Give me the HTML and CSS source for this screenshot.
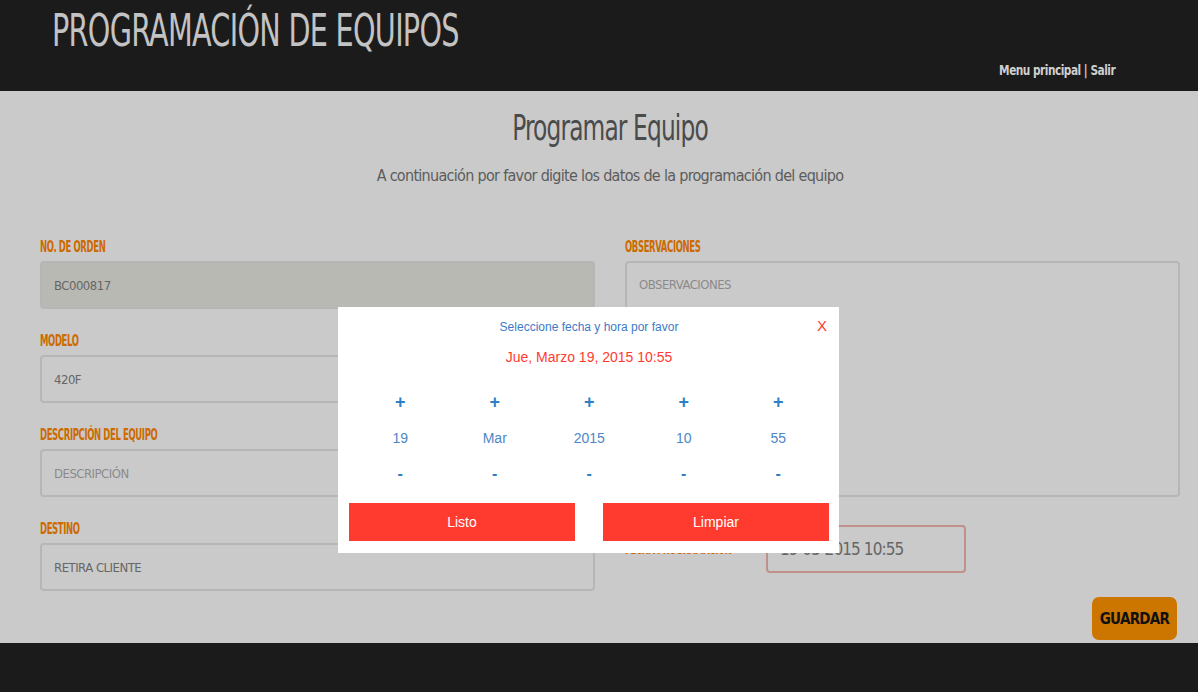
FILE: index.html
```html
<!DOCTYPE html>
<html lang="es">
<head>
<meta charset="utf-8">
<title>Programación de equipos</title>
<link rel="stylesheet" href="styles.css">
</head>
<body>
<header class="top">
  <h1 class="brand">PROGRAMACIÓN DE EQUIPOS</h1>
  <nav class="topnav"><a href="#">Menu principal</a> | <a href="#">Salir</a></nav>
</header>
<main class="page">
  <section class="intro">
    <h2 class="intro-title">Programar Equipo</h2>
    <p class="intro-text">A continuación por favor digite los datos de la programación del equipo</p>
  </section>
  <form class="form">
    <div class="col">
      <div class="field">
        <label class="lbl">NO. DE ORDEN</label>
        <div class="inp readonly">BC000817</div>
      </div>
      <div class="field">
        <label class="lbl">MODELO</label>
        <div class="inp">420F</div>
      </div>
      <div class="field">
        <label class="lbl">DESCRIPCIÓN DEL EQUIPO</label>
        <div class="inp placeholder">DESCRIPCIÓN</div>
      </div>
      <div class="field">
        <label class="lbl">DESTINO</label>
        <div class="inp">RETIRA CLIENTE</div>
      </div>
    </div>
    <div class="col">
      <div class="field">
        <label class="lbl">OBSERVACIONES</label>
        <div class="inp area placeholder">OBSERVACIONES</div>
      </div>
      <div class="daterow">
        <label class="lbl">FECHA PROGRAMACIÓN</label>
        <div class="inp date">19-03-2015 10:55</div>
      </div>
      <div class="actions"><button type="button" class="save">GUARDAR</button></div>
    </div>
  </form>
</main>
<footer class="bottom"></footer>

<div class="picker">
  <div class="picker-head">Seleccione fecha y hora por favor</div>
  <span class="picker-close">X</span>
  <div class="picker-date">Jue, Marzo 19, 2015 10:55</div>
  <div class="picker-grid">
    <span class="pm">+</span><span class="pm">+</span><span class="pm">+</span><span class="pm">+</span><span class="pm">+</span>
    <span class="val">19</span><span class="val">Mar</span><span class="val">2015</span><span class="val">10</span><span class="val">55</span>
    <span class="pm minus">-</span><span class="pm minus">-</span><span class="pm minus">-</span><span class="pm minus">-</span><span class="pm minus">-</span>
  </div>
  <div class="picker-btns">
    <button type="button" class="pbtn">Listo</button>
    <button type="button" class="pbtn">Limpiar</button>
  </div>
</div>
</body>
</html>
```
FILE: styles.css
```css
* { box-sizing: border-box; }
html, body { margin: 0; padding: 0; }
body {
  width: 1198px;
  height: 692px;
  overflow: hidden;
  background: #cacaca;
  font-family: "DejaVu Sans", sans-serif;
  font-stretch: condensed;
  position: relative;
}
.top {
  height: 91px;
  background: #1b1b1b;
  padding: 0 83px 0 52px;
  display: flex;
  flex-direction: column;
}
.brand {
  margin: 8px 0 0;
  font-size: 44px;
  line-height: 46px;
  font-weight: normal;
  color: #c3c3c3;
  letter-spacing: -1px;
  white-space: nowrap;
  transform: scaleX(0.725);
  transform-origin: left center;
}
.topnav {
  margin-top: 8px;
  align-self: flex-end;
  font-size: 14px;
  font-weight: bold;
  color: #cfcfcf;
  letter-spacing: -0.6px;
  transform: scaleX(0.84);
  transform-origin: right center;
}
.topnav a { color: #cfcfcf; text-decoration: none; }
.page {
  height: 552px;
  padding: 0 18px 0 40px;
}
.intro { text-align: center; padding-top: 16px; }
.intro-title {
  margin: 0;
  font-size: 36px;
  line-height: 42px;
  font-weight: normal;
  color: #4b4b4b;
  letter-spacing: -1.2px;
  transform: scaleX(0.72);
}
.intro-text {
  margin: 16px 0 0;
  font-size: 16px;
  line-height: 22px;
  color: #5c5c5c;
  letter-spacing: -0.7px;
}
.form {
  display: grid;
  grid-template-columns: 555px 555px;
  column-gap: 30px;
  margin-top: 50px;
}
.field { display: flex; flex-direction: column; margin-bottom: 22px; }
.lbl {
  font-size: 15px;
  line-height: 20px;
  height: 20px;
  font-weight: bold;
  color: #cc6a00;
  margin-bottom: 4px;
  letter-spacing: -0.6px;
  white-space: nowrap;
  transform: scaleX(0.63);
  transform-origin: left center;
}
.inp {
  height: 48px;
  border: 2px solid #b6b6b6;
  border-radius: 4px;
  padding: 0 12px;
  display: flex;
  align-items: center;
  font-size: 13px;
  color: #666;
  letter-spacing: -0.5px;
}
.inp.readonly { background: #b9b9b3; }
.inp.placeholder { color: #8a8a8a; }
.inp.area { height: 236px; align-items: flex-start; padding-top: 14px; }
.daterow { display: flex; align-items: center; gap: 4px; margin-top: 28px; }
.daterow .lbl { margin: 0; width: 215px; flex: none; margin-right: -78px; }
.inp.date {
  width: 200px;
  height: 48px;
  border-color: #c0908a;
  padding-left: 12px;
  font-size: 17px;
  letter-spacing: -0.9px;
}
.actions { display: flex; justify-content: flex-end; margin-top: 24px; margin-right: 3px; }
.save {
  width: 85px;
  height: 43px;
  border: none;
  border-radius: 7px;
  background: #cc7600;
  color: #111;
  font-family: inherit;
  font-stretch: condensed;
  font-size: 15px;
  font-weight: bold;
  letter-spacing: -0.7px;
}
.bottom { height: 49px; background: #1b1b1b; }

.picker {
  position: absolute;
  left: 338px;
  top: 307px;
  width: 501px;
  height: 246px;
  background: #fff;
  font-family: "Liberation Sans", Arial, sans-serif;
  font-stretch: normal;
  padding: 12px 10px 0 11px;
}
.picker-head {
  text-align: center;
  font-size: 12px;
  line-height: 16px;
  color: #3d7bc6;
}
.picker-close {
  position: absolute;
  right: 12px;
  top: 10px;
  font-size: 15px;
  color: #ff3b30;
}
.picker-date {
  text-align: center;
  margin-top: 13px;
  font-size: 14px;
  line-height: 18px;
  color: #ff3b30;
}
.picker-grid {
  display: grid;
  grid-template-columns: repeat(5, 94.5px);
  grid-auto-rows: 36px;
  margin: 18px 0 0 4px;
  text-align: center;
  align-items: center;
}
.pm { font-size: 18px; font-weight: bold; color: #2f7fc6; }
.val { font-size: 14px; color: #4f86c6; }
.minus { font-size: 16px; }
.picker-btns {
  display: flex;
  justify-content: space-between;
  margin-top: 11px;
}
.pbtn {
  width: 226px;
  height: 38px;
  border: none;
  background: #ff3b30;
  color: #fff;
  font-family: "Liberation Sans", Arial, sans-serif;
  font-size: 14px;
}
```
